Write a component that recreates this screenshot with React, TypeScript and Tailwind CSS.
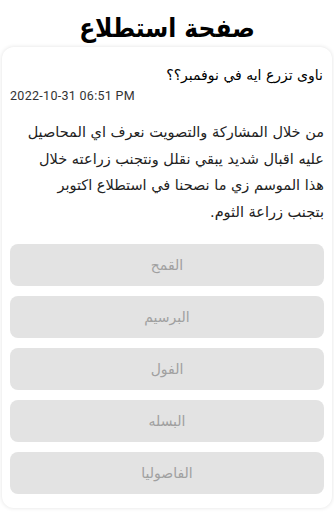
const options = ["القمح", "البرسيم", "الفول", "البسله", "الفاصوليا"];

export default function App() {
  return (
    <div
      dir="rtl"
      className="min-h-[512px] w-[334px] bg-white"
      style={{ fontFamily: '"DejaVu Sans", sans-serif' }}
    >
      {/* Page title */}
      <h1
        className="pt-[10px] text-center text-[26px] font-bold leading-[36px] text-black"
        style={{ fontFamily: '"DejaVu Sans Condensed", "DejaVu Sans", sans-serif' }}
      >
        صفحة استطلاع
      </h1>

      {/* Poll card */}
      <div className="mx-[2px] mt-[1px] rounded-[12px] bg-white px-[8px] pb-[14px] pt-[18px] shadow-[0_0_4px_rgba(0,0,0,0.12)]">
        <p className="pr-[1px] text-[14px] leading-[20px] text-black">
          ناوى تزرع ايه في نوفمبر؟؟
        </p>
        <p
          dir="ltr"
          className="mt-[3px] text-left text-[12.5px] leading-[16px] tracking-[0.3px] text-[#333]"
          style={{ fontFamily: "Roboto, sans-serif" }}
        >
          2022-10-31 06:51 PM
        </p>

        <p className="mt-[15px] pl-[10px] text-[14.5px] leading-[26.5px] text-[#222]">
          من خلال المشاركة والتصويت نعرف اي المحاصيل عليه اقبال شديد يبقي نقلل ونتجنب زراعته خلال هذا الموسم زي ما نصحنا في استطلاع اكتوبر بتجنب زراعة الثوم.
        </p>

        <div className="mt-[19px] flex flex-col gap-[10px]">
          {options.map((o) => (
            <button
              key={o}
              type="button"
              className="h-[42px] w-full rounded-[8px] bg-[#e3e3e3] text-center text-[14px] text-[#a0a0a0]"
            >
              {o}
            </button>
          ))}
        </div>
      </div>
    </div>
  );
}
